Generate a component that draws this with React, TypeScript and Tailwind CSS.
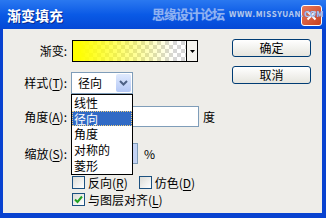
import type { ReactNode } from 'react'

const font = { fontFamily: '"Noto Sans CJK SC", "Noto Sans", sans-serif' }

function U({ children }: { children: ReactNode }) {
  return <span className="underline underline-offset-2">{children}</span>
}

function Label({ children }: { children: ReactNode }) {
  return (
    <div className="w-[65px] shrink-0 whitespace-nowrap pr-[1px] text-right text-[12px] leading-none text-black">
      {children}
    </div>
  )
}

function Check({ checked }: { checked?: boolean }) {
  return (
    <div className="flex h-[13px] w-[13px] shrink-0 items-center justify-center border border-[#1C5180] bg-gradient-to-br from-[#DCDCD7] to-white">
      {checked && (
        <svg width="9" height="9" viewBox="0 0 9 9">
          <path d="M1 4.5 L3.5 7 L8 1.5" fill="none" stroke="#21A121" strokeWidth="2" />
        </svg>
      )}
    </div>
  )
}

function XpButton({ children }: { children: ReactNode }) {
  return (
    <button
      type="button"
      className="flex h-[18px] w-[79px] items-center justify-center rounded-[3px] border border-[#003C74] bg-gradient-to-b from-white to-[#E6E5DE] text-[12px] leading-none text-black"
    >
      {children}
    </button>
  )
}

export default function App() {
  return (
    <div className="flex h-[218px] w-[326px] flex-col bg-[#0842D0]" style={font}>
      {/* title bar */}
      <div className="relative flex h-[29px] shrink-0 items-center whitespace-nowrap bg-gradient-to-b from-[#2A78F0] via-[#0A5AE6] to-[#0548D6] pl-[7px]">
        <span className="w-[60px] shrink-0 text-[14px] font-bold leading-none text-white [text-shadow:1px_1px_0_#0A2A90]">
          渐变填充
        </span>
        <div className="absolute right-[4px] top-[5px] flex h-[21px] w-[21px] items-center justify-center rounded-[3px] border border-white bg-gradient-to-br from-[#E8795A] to-[#C8401E]">
          <svg width="11" height="11" viewBox="0 0 11 11">
            <path d="M1.5 1.5 L9.5 9.5 M9.5 1.5 L1.5 9.5" stroke="white" strokeWidth="2" />
          </svg>
        </div>
        {/* watermark over the bar */}
        <div className="absolute left-[152px] top-[7px] z-10 flex items-center">
          <span className="shrink-0 text-[13px] font-bold leading-none tracking-[-1px] text-[#8FB2F2] [text-shadow:0_0_1px_#4A7FE6]">
            思缘设计论坛
          </span>
          <span className="ml-[5px] shrink-0 text-[8px] font-bold leading-none tracking-[0.6px] text-[#B4CCF6] [text-shadow:0_0_1px_#3A64B8]">
            WWW.MISSYUAN.COM
          </span>
        </div>
      </div>

      {/* body */}
      <div className="relative mb-[5px] ml-[3px] mr-[4px] flex flex-1 bg-[#EEEDE9]">
        <div className="flex flex-col pt-[11px]">
          {/* gradient row */}
          <div className="flex h-[22px] items-center gap-[4px]">
            <Label>渐变:</Label>
            <div className="flex h-[22px] w-[126px] border border-black bg-white">
              <div className="flex-1 bg-[repeating-conic-gradient(#D6D6D6_0_25%,#FFFFFF_0_50%)] bg-size-[8px_8px]">
                <div className="h-full w-full bg-gradient-to-r from-[#FFFF00] from-[5%] to-transparent to-[90%]" />
              </div>
              <div className="flex w-[11px] items-center justify-center border-l border-black bg-[#F4F3EE]">
                <svg width="5" height="3" viewBox="0 0 5 3">
                  <path d="M0 0 H5 L2.5 3 Z" fill="black" />
                </svg>
              </div>
            </div>
          </div>

          {/* style row */}
          <div className="mt-[10px] flex h-[22px] items-center gap-[3px]">
            <Label>
              样式(<U>T</U>):
            </Label>
            <div className="flex h-[22px] w-[62px] items-center border border-[#7F9DB9] bg-white">
              <span className="flex-1 pl-[6px] text-[12px] leading-none">径向</span>
              <div className="mr-[1px] flex h-[18px] w-[15px] items-center justify-center rounded-[2px] bg-gradient-to-b from-[#E0EAFD] to-[#B4C8F6]">
                <svg width="9" height="6" viewBox="0 0 9 6">
                  <path d="M1 1 L4.5 4.5 L8 1" fill="none" stroke="#4D6185" strokeWidth="2" />
                </svg>
              </div>
            </div>
          </div>

          {/* angle row */}
          <div className="mt-[12px] flex h-[21px] items-center gap-[3px]">
            <Label>
              角度(<U>A</U>):
            </Label>
            <div className="h-[21px] w-[128px] border border-[#7F9DB9] bg-white" />
            <span className="ml-[1px] text-[12px] leading-none">度</span>
          </div>

          {/* scale row */}
          <div className="mt-[16px] flex h-[21px] items-center gap-[3px]">
            <Label>
              缩放(<U>S</U>):
            </Label>
            <div className="flex h-[21px] w-[67px] justify-end border border-[#7F9DB9] bg-white">
              <div className="w-[6px] bg-[#C4D3F4]" />
            </div>
            <span className="ml-[3px] text-[12px] leading-none">%</span>
          </div>

          {/* checkboxes */}
          <div className="mt-[12px] flex h-[13px] items-center pl-[69px] text-[12px] leading-none">
            <Check />
            <span className="ml-[3px]">
              反向(<U>R</U>)
            </span>
            <div className="ml-[11px] flex items-center">
              <Check />
              <span className="ml-[3px]">
                仿色(<U>D</U>)
              </span>
            </div>
          </div>
          <div className="mt-[4px] flex h-[13px] items-center pl-[69px] text-[12px] leading-none">
            <Check checked />
            <span className="ml-[3px]">
              与图层对齐(<U>L</U>)
            </span>
          </div>
        </div>

        {/* buttons */}
        <div className="ml-auto mr-[11px] flex flex-col gap-[9px] pt-[10px]">
          <XpButton>确定</XpButton>
          <XpButton>取消</XpButton>
        </div>

        {/* open dropdown list */}
        <div className="absolute left-[68px] top-[65px] flex w-[62px] flex-col border border-black bg-white text-[12px] leading-none">
          <div className="flex h-[16px] items-center pl-[2px]">线性</div>
          <div className="flex h-[15px] items-center border border-dotted border-[#F0D080] bg-[#316AC5] pl-[1px] text-white">
            径向
          </div>
          <div className="flex h-[16px] items-center pl-[2px]">角度</div>
          <div className="flex h-[16px] items-center pl-[2px]">对称的</div>
          <div className="flex h-[16px] items-center pl-[2px]">菱形</div>
        </div>
      </div>
    </div>
  )
}
